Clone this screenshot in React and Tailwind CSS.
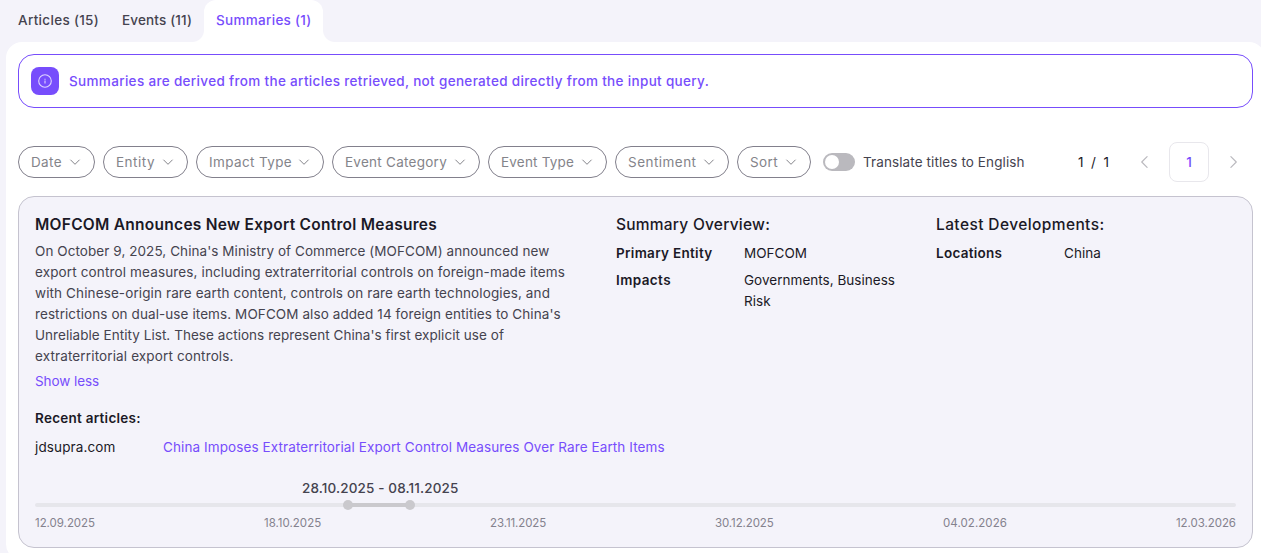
import React, { useState } from 'react';

const tabs = [
  { label: 'Articles (15)', className: 'w-[104px] tracking-[0.32px]' },
  { label: 'Events (11)', className: 'w-[94px] tracking-[0.16px]' },
  { label: 'Summaries (1)', className: 'w-[119px] tracking-[0.3px]' },
];

const filters = [
  { label: 'Date', className: 'w-[77px] tracking-[0.38px]' },
  { label: 'Entity', className: 'w-[85px] tracking-[0.49px]' },
  { label: 'Impact Type', className: 'w-[128px] tracking-[0.368px]' },
  { label: 'Event Category', className: 'w-[148px] tracking-[0.26px]' },
  { label: 'Event Type', className: 'w-[119px] tracking-[0.19px]' },
  { label: 'Sentiment', className: 'w-[114px] tracking-[0.468px]' },
  { label: 'Sort', className: 'w-[74px] tracking-[0.384px]' },
];

const summaryLines = [
  { text: "On October 9, 2025, China's Ministry of Commerce (MOFCOM) announced new", className: 'tracking-[0.07px]' },
  { text: 'export control measures, including extraterritorial controls on foreign-made items', className: 'tracking-[0.136px]' },
  { text: 'with Chinese-origin rare earth content, controls on rare earth technologies, and', className: 'tracking-[0.116px]' },
  { text: "restrictions on dual-use items. MOFCOM also added 14 foreign entities to China's", className: 'tracking-[0.09px]' },
  { text: "Unreliable Entity List. These actions represent China's first explicit use of", className: 'tracking-[0.046px]' },
  { text: 'extraterritorial export controls.', className: 'tracking-[0.134px]' },
];

const ticks = [
  { date: '12.09.2025', className: 'w-[60px] tracking-[-0.04px]' },
  { date: '18.10.2025', className: 'w-[57px] tracking-[0.007px]' },
  { date: '23.11.2025', className: 'w-[56px] tracking-[-0.1px]' },
  { date: '30.12.2025', className: 'w-[59px] tracking-[-0.1px]' },
  { date: '04.02.2026', className: 'w-[64px] tracking-[0.06px]' },
  { date: '12.03.2026', className: 'w-[60px] tracking-[-0.06px]' },
];

const Chevron = ({ className, d }) => (
  <svg className={className} viewBox="0 0 12 12" fill="none" stroke="currentColor" strokeLinecap="round" strokeLinejoin="round">
    <path d={d} />
  </svg>
);

const Tabs = ({ active, onSelect }) => (
  <div className="flex h-[42px] pl-[6px] text-[13.5px] font-medium">
    {tabs.map((tab) => (
      <button
        key={tab.label}
        onClick={() => onSelect(tab.label)}
        className={`relative flex items-center pl-3 pb-[2px] whitespace-nowrap ${tab.className} ${
          tab.label === active ? 'rounded-t-xl bg-white text-[#774dfc]' : 'text-[#45434f]'
        }`}
      >
        {tab.label}
        {tab.label === active && (
          <>
            <span className="absolute bottom-0 -left-3 size-3 bg-[radial-gradient(circle_at_0_0,transparent_11.5px,white_12.5px)]"></span>
            <span className="absolute bottom-0 -right-3 size-3 bg-[radial-gradient(circle_at_100%_0,transparent_11.5px,white_12.5px)]"></span>
          </>
        )}
      </button>
    ))}
  </div>
);

const InfoBanner = () => (
  <div className="flex h-[54px] items-center gap-[10px] rounded-2xl border border-[#774dfc] pl-3">
    <span className="flex size-7 items-center justify-center rounded-lg bg-[#774dfc]">
      <svg className="size-[14px] text-[#e0d6ff]" viewBox="0 0 14 14" fill="none" stroke="currentColor" strokeWidth="1.1">
        <circle cx="7" cy="7" r="6.3" />
        <path d="M7 6.6V9.4M7 4.8V5.8" />
      </svg>
    </span>
    <p className="text-[13.5px] font-medium tracking-[0.333px] whitespace-nowrap text-[#774dfc]">
      Summaries are derived from the articles retrieved, not generated directly from the input query.
    </p>
  </div>
);

const FilterBar = () => {
  const [translate, setTranslate] = useState(false);

  return (
    <div className="mt-[34px] flex h-10 items-center text-[13.5px]">
      <div className="flex gap-2">
        {filters.map((filter) => (
          <button
            key={filter.label}
            className={`flex h-8 items-center justify-between rounded-full border border-[#82808c] pr-[13px] pl-3 whitespace-nowrap text-[#84848a] ${filter.className}`}
          >
            {filter.label}
            <Chevron className="size-3" d="M1.7 4L6 8.3L10.3 4" />
          </button>
        ))}
      </div>
      <button
        onClick={() => setTranslate(!translate)}
        className={`ml-3 flex h-[18px] w-8 items-center rounded-full p-[2px] ${
          translate ? 'justify-end bg-[#774dfc]' : 'bg-[#bab9be]'
        }`}
      >
        <span className="size-[14px] rounded-full bg-white"></span>
      </button>
      <span className="ml-2 w-[215px] tracking-[0.1px] whitespace-nowrap text-[#45434f]">Translate titles to English</span>
      <span className="w-[60px] whitespace-pre text-[#1b1926]">1  /  1</span>
      <Chevron className="size-[14px] text-[#bab9be]" d="M7.8 1.4L3.2 6L7.8 10.6" />
      <button className="ml-[17px] size-10 rounded-lg border border-[#e8e7ec] font-medium text-[#774dfc]">1</button>
      <Chevron className="ml-[17px] size-[14px] text-[#bab9be]" d="M4.2 1.4L8.8 6L4.2 10.6" />
    </div>
  );
};

const Timeline = () => (
  <div className="mt-5">
    <div className="ml-[267px] h-[21px] text-[13.5px] leading-[21px] font-medium tracking-[0.13px] whitespace-nowrap text-[#45434f]">
      28.10.2025 - 08.11.2025
    </div>
    <div className="mt-1 h-1 rounded-full bg-[#e6e6eb]">
      <div className="ml-[308px] flex h-1 w-[72px] items-center justify-between bg-[linear-gradient(90deg,transparent_5px,#cac9cd_5px,#cac9cd_67px,transparent_67px)]">
        <span className="size-[10px] shrink-0 rounded-full bg-[#cac9cd]"></span>
        <span className="size-[10px] shrink-0 rounded-full bg-[#cac9cd]"></span>
      </div>
    </div>
    <div className="mt-[7px] flex justify-between text-[11.5px] leading-[18px] text-[#84828e]">
      {ticks.map((tick) => (
        <span key={tick.date} className={`whitespace-nowrap ${tick.className}`}>{tick.date}</span>
      ))}
    </div>
  </div>
);

const SummaryCard = () => (
  <div className="mt-[14px] h-[352px] rounded-2xl border border-[#c5c3cf] bg-[#f4f3fa] p-4 text-[13.5px] leading-[21px] text-[#1b1926]">
    <div className="flex h-[179px]">
      <div className="w-[581px]">
        <h2 className="text-[15.5px] leading-6 font-semibold tracking-[0.275px]">MOFCOM Announces New Export Control Measures</h2>
        <p className="mt-1 whitespace-nowrap text-[#45434f]">
          {summaryLines.map((line) => (
            <span key={line.text} className={`block ${line.className}`}>{line.text}</span>
          ))}
        </p>
        <button className="mt-1 block tracking-[-0.08px] text-[#774dfc]">Show less</button>
      </div>
      <div className="w-[320px]">
        <h3 className="text-[15.5px] leading-6 font-medium tracking-[0.24px]">Summary Overview:</h3>
        <dl className="mt-[6px] grid grid-cols-[128px_160px] gap-y-[6px]">
          <dt className="font-semibold tracking-[0.3px]">Primary Entity</dt>
          <dd className="tracking-[0.02px]">MOFCOM</dd>
          <dt className="font-semibold tracking-[0.41px]">Impacts</dt>
          <dd className="tracking-[0.027px]">Governments, Business Risk</dd>
        </dl>
      </div>
      <div>
        <h3 className="text-[15.5px] leading-6 font-medium tracking-[0.4px]">Latest Developments:</h3>
        <dl className="mt-[6px] grid grid-cols-[128px_160px]">
          <dt className="font-semibold tracking-[0.28px]">Locations</dt>
          <dd className="tracking-[0.07px]">China</dd>
        </dl>
      </div>
    </div>
    <h4 className="mt-4 font-semibold tracking-[0.26px]">Recent articles:</h4>
    <div className="mt-2 flex">
      <span className="w-32 tracking-[0.128px]">jdsupra.com</span>
      <a href="#" className="tracking-[0.1px] text-[#774dfc]">
        China Imposes Extraterritorial Export Control Measures Over Rare Earth Items
      </a>
    </div>
    <Timeline />
  </div>
);

const App = () => {
  const [activeTab, setActiveTab] = useState('Summaries (1)');

  return (
    <div className="h-[553px] overflow-hidden bg-[#f4f3fa] font-['Inter',sans-serif]">
      <Tabs active={activeTab} onSelect={setActiveTab} />
      <main className="ml-[6px] h-[518px] w-[1259px] rounded-2xl bg-white p-3">
        <InfoBanner />
        <FilterBar />
        <SummaryCard />
      </main>
    </div>
  );
};

export default App;
